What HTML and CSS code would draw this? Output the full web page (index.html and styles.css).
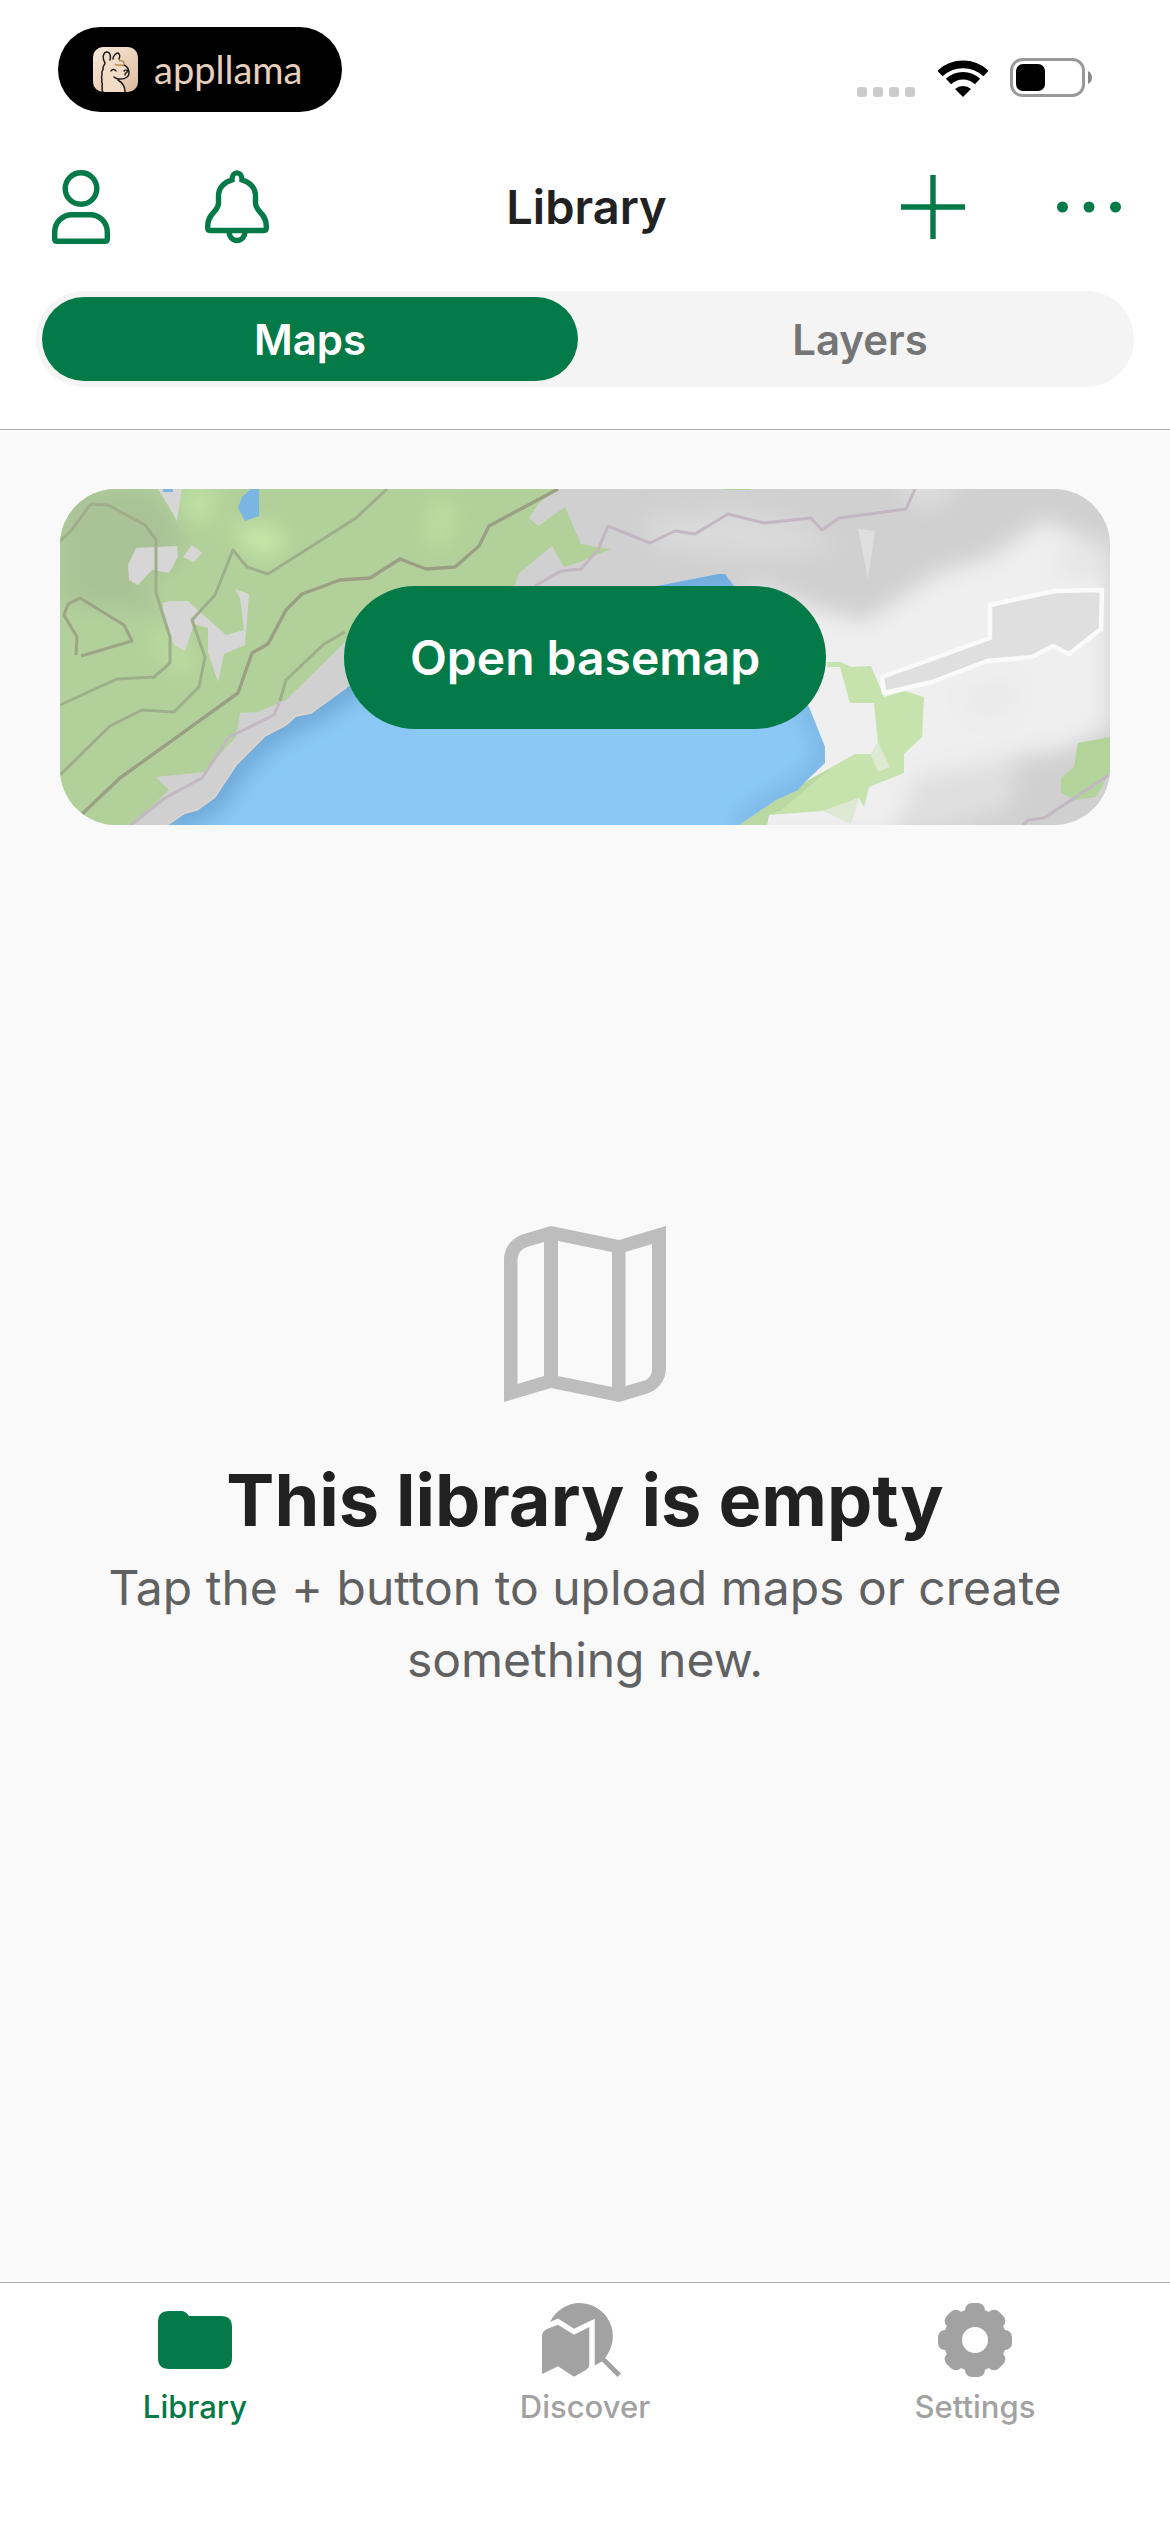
FILE: index.html
```html
<!DOCTYPE html>
<html lang="en">
<head>
  <meta charset="UTF-8">
  <title>Library</title>
  <meta name="viewport" content="width=device-width, initial-scale=1.0">
  <link rel="stylesheet" href="styles.css">
</head>
<body>

  <header class="header">
    <div class="status-bar">
      <div class="app-pill">
        <svg class="llama" viewBox="0 0 45 45" aria-hidden="true">
          <defs>
            <linearGradient id="fur" x1="0" y1="0" x2="1" y2="1">
              <stop offset="0" stop-color="#fbeadb"/>
              <stop offset="1" stop-color="#dcbb9f"/>
            </linearGradient>
          </defs>
          <rect width="45" height="45" rx="10" fill="url(#fur)"/>
          <path d="M11 45c-2-2 0-4-2-6 1-2-1-4 0-6-1-3 0-4 0-6-1-3 2-4 1-6 0-3 2-3 2-5-3-5-2-11 2-11 3 0 4 4 3 8l3 1c0-4 3-8 5-8 2 1 2 4 1 7 3 1 5 3 5 6 4 2 5 6 5 8 0 4-4 6-8 6 2 3 4 6 4 12z" fill="#f3dcc6"/>
          <path d="M10 45c-2-2 0-4-1-6 1-2-1-4 0-6-1-3 0-4 0-6-1-3 2-4 1-6 0-3 2-3 2-5-3-5-2-11 2-11 3 0 4 4 3 8M20 12c0-3 3-6 5-6 2 1 2 4 1 6M31 18c4 2 5 5 5 8 0 4-4 6-8 6-4 0-6-1-7-2M25 33c5 3 7 7 7 12M18 24c1-2 4-2 5 0M31 24c1-1 3-1 4 0l-3 3v1" fill="none" stroke="#1d1d1d" stroke-width="1.500" stroke-linecap="round"/>
          <path d="M22 17c2 2 4 1 5 1 2 1 4 0 4-2 0-2-3-3-5-2" fill="none" stroke="#b8864f" stroke-width="1.400"/>
        </svg>
        <span class="app-name">appllama</span>
      </div>
      <div class="status-icons">
        <span class="signal"><i></i><i></i><i></i><i></i></span>
        <svg class="wifi" viewBox="0 0 50 38" aria-hidden="true">
          <path d="M2 14.500A33.500 33.500 0 0 1 48 14.500M10.500 22.500A21 21 0 0 1 39.500 22.500" fill="none" stroke="#000" stroke-width="7.600"/>
          <path d="M25 38l-8-8a12 12 0 0 1 16 0z"/>
        </svg>
        <svg class="battery" viewBox="0 0 82 39" aria-hidden="true">
          <rect x="1.500" y="1.500" width="72" height="36" rx="11" fill="none" stroke="#999" stroke-width="3"/>
          <rect x="6" y="6" width="29" height="27" rx="7"/>
          <path d="M78 13q4 2 4 6.500t-4 6.500z" fill="#888"/>
        </svg>
      </div>
    </div>

    <div class="nav-bar">
      <div class="nav-group">
        <button class="icon-button" aria-label="Profile">
          <svg width="58" height="74" viewBox="0 0 58 74" class="line-icon" stroke-width="5.400">
            <circle cx="29" cy="18.500" r="15.800"/>
            <path d="M2.700 62A17.300 17.300 0 0 1 20 44.700H38A17.300 17.300 0 0 1 55.300 62V69Q55.300 71.300 53 71.300H5Q2.700 71.300 2.700 69Z"/>
          </svg>
        </button>
        <button class="icon-button" aria-label="Notifications">
          <svg width="64" height="74" viewBox="0 0 64 74" class="line-icon" stroke-width="5.400">
            <path d="M27 10C19 12 13.500 18 13.500 26V33C13.500 42 2.700 43 2.700 56V58Q2.700 60.500 5 60.500H59Q61.300 60.500 61.300 58V56C61.300 43 50.500 42 50.500 33V26C50.500 18 45 12 37 10C37 .5 27 .5 27 10Z"/>
            <path d="M24 62a8 8.500 0 0 0 16 0"/>
          </svg>
        </button>
      </div>
      <h1 class="title">Library</h1>
      <div class="nav-group nav-group-right">
        <button class="icon-button" aria-label="Add">
          <svg width="64" height="64" viewBox="0 0 64 64" class="line-icon" stroke-width="5.400">
            <path d="M32 0V64M0 32H64"/>
          </svg>
        </button>
        <button class="icon-button" aria-label="More">
          <svg width="64" height="64" viewBox="0 0 64 64" class="fill-icon">
            <circle cx="5.500" cy="32" r="5.500"/>
            <circle cx="32" cy="32" r="5.500"/>
            <circle cx="58.500" cy="32" r="5.500"/>
          </svg>
        </button>
      </div>
    </div>

    <div class="switch">
      <button class="switch-item active">Maps</button>
      <button class="switch-item">Layers</button>
    </div>
  </header>

  <main class="content">
    <div class="basemap">
      <svg class="map" viewBox="0 0 1050 336" preserveAspectRatio="xMidYMid slice" aria-hidden="true">
        <defs>
          <filter id="soft" x="-30%" y="-30%" width="160%" height="160%"><feGaussianBlur stdDeviation="11"/></filter>
          <filter id="line" x="-10%" y="-10%" width="120%" height="120%"><feGaussianBlur stdDeviation=".7"/></filter>
          <clipPath id="lake"><path d="M107 336L125 324L137 321L155 308L176 276L205 247L226 236L236 227L251 224L287 198L597 97L659 85H665L674 97L749 218L757 238L765 258V274L745 293L738 301L716 311L679 336Z"/></clipPath>
        </defs>
        <rect width="1050" height="336" fill="#d0d0d0"/>

        <!-- relief -->
        <g filter="url(#soft)">
          <path d="M690 95L770 124L806 132L841 108L877 84L930 68L984 31L1050 60V238L1002 262L949 268L859 290L835 350H680Z" fill="#efefef"/>
          <path d="M580 30L680 20L740 35L780 60L700 70L600 60Z" fill="#dadada"/>
          <path d="M835 -10H905L880 15H850ZM850 290L960 265L950 320L850 350Z" fill="#dfdfdf"/>
          <path d="M1000 60L1050 50V90H1000Z" fill="#e6e6e6"/>
          <path d="M900 200L960 190L950 225L910 228Z" fill="#e9e9e9"/>
        </g>
        <path d="M798 40L808 90L815 42Z" fill="#dedede" filter="url(#line)"/>

        <!-- forest -->
        <path d="M0 0H498L480 13L469 29L478 37L505 18L521 55L537 58L551 60L520 73L504 78L492 57L459 84L455 96L285 153L226 211L198 223L180 224L176 248L144 283L96 288L109 301L73 336H0Z" fill="#b2d19a"/>
        <path d="M767 173H781L791 178L811 177L824 208L845 202L864 208L862 248L844 265V284L809 298L804 318L799 309L763 322L709 326L707 336H679L716 311L745 293L795 265H811L818 253L814 214H790L780 178H767Z" fill="#c6e3ae"/>
        <path d="M679 336L716 311L745 293L770 280L720 322L709 326L707 336Z" fill="#b2d19a" opacity=".6"/>
        <path d="M811 266L818 253L830 278L818 283ZM763 322L799 309L791 335Z" fill="#dde9d2"/>
        <path d="M1050 248L1018 254L1014 278L1001 289V304L1015 311L1036 308L1050 283Z" fill="#b2d39a"/>
        <path d="M664 0H691V1H664Z" fill="#b2d19a"/>
        <g filter="url(#soft)">
          <path d="M0 0H95L125 45L115 80L80 90L105 130L60 120L0 115Z" fill="#a9c396"/>
          <path d="M128 0L155 0L145 32L125 25Z" fill="#c4e8a6"/>
          <path d="M175 35L200 40L225 45L215 66L190 62Z" fill="#cbefac"/>
          <path d="M378 10L390 15L382 60L372 50Z" fill="#c4e8a6"/>
          <path d="M85 130L112 150L138 170L125 190L98 160Z" fill="#bcdda2"/>
        </g>

        <!-- clearings -->
        <path d="M98 0H122L117 31L122 41L112 23ZM76 59L117 57L118 68L109 84L92 81L78 96L69 91L68 76ZM132 56L142 64L134 73L123 68ZM103 114L110 112H128L166 146L184 141L180 109L175 100L189 105L185 156L164 165L158 193L148 163V139L134 135L125 162L114 156L103 128Z" fill="#d6d6d6"/>
        <path d="M191 0H199V27L185 32L178 19L182 8ZM103 0H113V3H103Z" fill="#7bb5e4"/>

        <!-- lake -->
        <g clip-path="url(#lake)">
          <rect y="80" width="1050" height="256" fill="#8bc8f5"/>
          <path d="M107 336L125 324L137 321L155 308L176 276L205 247L226 236L236 227L251 224L287 198L597 97L659 85H665L674 97" fill="none" stroke="#68a2d2" stroke-width="22" filter="url(#soft)"/>
          <path d="M674 97L749 218L757 238L765 258V274L745 293L738 301L716 311L679 336" fill="none" stroke="#6ba5d5" stroke-width="10" filter="url(#soft)"/>
        </g>
        <path d="M107 336L125 324L137 321L155 308L176 276L205 247L226 236L236 227L251 224L287 198" fill="none" stroke="#e2d6cb" stroke-width="1.500"/>

        <!-- contours -->
        <g fill="none" stroke-linejoin="round" filter="url(#line)">
          <path d="M21 326L60 289L178 204L192 164L208 155L226 121L242 105L280 91L310 89L340 70L366 80L395 78L419 57L429 37L498 0" stroke="#9b9f83" stroke-width="3.400"/>
          <path d="M0 286L50 237L82 221L114 223L139 198L145 168L132 131L155 106L173 61L187 78L208 85L296 29L327 0M0 216L57 190L94 188L110 174V148L96 104V51L85 36L48 16L31 15L10 43L0 52M285 143L264 155L226 191L220 212" stroke="#9fae8a" stroke-width="3"/>
          <path d="M21 167L72 152L64 136L20 109L8 115L4 126L17 148L16 166" stroke="#9ca586" stroke-width="3"/>
          <path d="M220 212L214 226L169 248L142 289L105 309L71 336M475 97L501 82L521 80L538 61L548 37L590 54L615 42L635 45L668 25L704 34L751 29L762 41L779 29L846 20L855 0M963 336L968 331L984 329L1049 286" stroke="#c3b7c1" stroke-width="3"/>
          <path d="M822 188L930 149V116L995 102L1042 101L1041 140L1009 165L993 157L972 168L927 172L872 193L824 204Z" fill="#dfdfdf" stroke="#fafafa" stroke-width="4.500"/>
        </g>
      </svg>
      <button class="open-button">Open basemap</button>
    </div>

    <section class="empty">
      <svg class="empty-icon" viewBox="0 0 162 176" aria-hidden="true">
        <path fill-rule="evenodd" d="M0 34C0 21 9 11 20 8L47 0L115 14L162 0V142C162 155 153 165 142 168L115 176L47 162L0 176ZM13.500 34V158L40 150V16L23 21C17 23 13.500 28 13.500 34ZM54 15V150L108 161V26ZM121.500 26V160L139 155C145 153 148 149 148 143V18Z"/>
      </svg>
      <h2>This library is empty</h2>
      <p>Tap the + button to upload maps or create something new.</p>
    </section>
  </main>

  <nav class="tab-bar">
    <a href="#library" class="tab active">
      <svg width="74" height="74" viewBox="0 0 74 74">
        <path d="M0 19Q0 8 11 8H22C27 8 29 10 31 13H63Q74 13 74 24V55Q74 66 63 66H11Q0 66 0 55Z"/>
      </svg>
      <span>Library</span>
    </a>
    <a href="#discover" class="tab">
      <svg width="86" height="74" viewBox="0 0 86 74">
        <path d="M8 19A33.300 33.300 0 0 1 38 0A33.300 33.300 0 0 1 63 54.800L79 70.500L75.500 74L60 58.500L52.700 62.500V15.700L32 25.700L16 15.500Z"/>
        <path d="M0 33Q0 28 6 25.500L16 21.700L32 31.700L47.300 24V61Q47.300 65 43 67.500L32 73.700L16 63.300L0 71Z"/>
      </svg>
      <span>Discover</span>
    </a>
    <a href="#settings" class="tab">
      <svg width="74" height="74" viewBox="0 0 74 74">
        <defs><rect id="tooth" x="27" width="20" height="74" rx="7"/></defs>
        <circle cx="37" cy="37" r="31.500"/>
        <use href="#tooth"/>
        <use href="#tooth" transform="rotate(45 37 37)"/>
        <use href="#tooth" transform="rotate(90 37 37)"/>
        <use href="#tooth" transform="rotate(135 37 37)"/>
        <circle cx="37" cy="37" r="13" fill="#fff"/>
      </svg>
      <span>Settings</span>
    </a>
  </nav>

</body>
</html>
```
FILE: styles.css
```css
* {
  box-sizing: border-box;
}

body {
  margin: 0;
  min-height: 100vh;
  display: flex;
  flex-direction: column;
  font-family: Inter, sans-serif;
  background: #f9f9f9;
  color: #212121;
}

button {
  border: none;
  background: none;
  padding: 0;
  font-family: inherit;
  cursor: pointer;
}

svg {
  display: block;
}

.header {
  background: #fff;
  border-bottom: 1px solid #b0b0b0;
  padding-bottom: 42px;
}

.status-bar {
  display: flex;
  justify-content: space-between;
  align-items: flex-start;
  padding: 27px 78px 0 58px;
}

.app-pill {
  display: flex;
  align-items: center;
  gap: 16px;
  width: 284px;
  height: 85px;
  padding-left: 35px;
  border-radius: 43px;
  background: #000;
}

.llama {
  width: 45px;
  height: 45px;
}

.app-name {
  font-family: Lato, sans-serif;
  font-size: 38px;
  line-height: 40px;
  padding-bottom: 2px;
  color: #e6cfbd;
}

.status-icons {
  display: flex;
  align-items: flex-end;
  padding-top: 31px;
}

.signal {
  display: flex;
  gap: 6px;
  margin-right: 23px;
}

.signal i {
  width: 10px;
  height: 10px;
  border-radius: 3px;
  background: #ccc;
}

.wifi {
  width: 50px;
  height: 38px;
  margin-right: 22px;
}

.battery {
  width: 82px;
  height: 39px;
}

.nav-bar {
  display: grid;
  grid-template-columns: 1fr auto 1fr;
  align-items: center;
  height: 100px;
  margin-top: 45px;
  padding: 0 49px 0 52px;
}

.nav-group {
  display: flex;
  align-items: center;
  gap: 95px;
}

.nav-group-right {
  justify-content: flex-end;
  gap: 92px;
}

.line-icon {
  fill: none;
  stroke: #047a48;
}

.fill-icon {
  fill: #047a48;
}

.title {
  margin: 0;
  font-size: 47px;
  font-weight: 600;
  line-height: 60px;
}

.switch {
  display: flex;
  gap: 14px;
  margin: 34px 36px 0;
  padding: 6px;
  border-radius: 48px;
  background: #f4f4f4;
}

.switch-item {
  flex: 1;
  height: 84px;
  border-radius: 42px;
  color: #757575;
  font-size: 42px;
  font-weight: 600;
}

.switch-item.active {
  background: #047a48;
  color: #fff;
}

.content {
  flex: 1;
  display: flex;
  flex-direction: column;
  padding: 59px 60px 185px;
}

.basemap {
  display: grid;
  place-items: center;
  height: 336px;
  border-radius: 56px;
  overflow: hidden;
}

.basemap > * {
  grid-area: 1 / 1;
}

.map {
  width: 100%;
  height: 336px;
}

.open-button {
  position: relative;
  height: 143px;
  padding: 0 66px;
  border-radius: 72px;
  background: #047a48;
  color: #fff;
  font-size: 48px;
  font-weight: 600;
}

.empty {
  flex: 1;
  display: flex;
  flex-direction: column;
  align-items: center;
  justify-content: center;
  text-align: center;
}

.empty-icon {
  width: 162px;
  height: 176px;
  fill: #bdbdbd;
}

.empty h2 {
  margin: 54px 0 8px;
  font-size: 72px;
  font-weight: 700;
  line-height: 88px;
}

.empty p {
  margin: 0;
  color: #616161;
  font-size: 48px;
  line-height: 72px;
}

.tab-bar {
  display: flex;
  height: 250px;
  padding-top: 20px;
  border-top: 1px solid #b0b0b0;
  background: #fff;
}

.tab {
  flex: 1;
  display: flex;
  flex-direction: column;
  align-items: center;
  gap: 12px;
  color: #a2a2a2;
  fill: #a2a2a2;
  font-size: 31px;
  font-weight: 500;
  line-height: 36px;
  text-decoration: none;
}

.tab.active {
  color: #047a48;
  fill: #047a48;
}
```
